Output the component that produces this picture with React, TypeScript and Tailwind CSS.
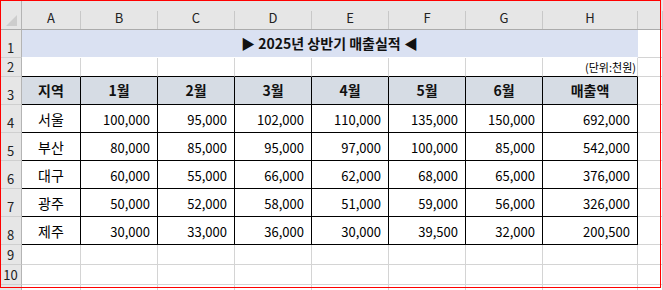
import React from "react";

const cols = ["A", "B", "C", "D", "E", "F", "G", "H"];
const headers = ["지역", "1월", "2월", "3월", "4월", "5월", "6월", "매출액"];
const data = [
  ["서울", "100,000", "95,000", "102,000", "110,000", "135,000", "150,000", "692,000"],
  ["부산", "80,000", "85,000", "95,000", "97,000", "100,000", "85,000", "542,000"],
  ["대구", "60,000", "55,000", "66,000", "62,000", "68,000", "65,000", "376,000"],
  ["광주", "50,000", "52,000", "58,000", "51,000", "59,000", "56,000", "326,000"],
  ["제주", "30,000", "33,000", "36,000", "30,000", "39,500", "32,000", "200,500"],
];

const font = { fontFamily: '"Noto Sans CJK KR", "Noto Sans", sans-serif' };

function RowHead({ n }: { n?: number }) {
  return (
    <div className="flex items-end justify-center overflow-hidden bg-[#e6e6e6] border-r border-b border-r-[#b4b4b4] border-b-[#cfcfcf] pb-[2px] text-[13px] leading-[14px] text-[#222]">
      {n}
    </div>
  );
}

function ColHead({ label }: { label: string }) {
  return (
    <div className="flex bg-[#e6e6e6] border-b border-b-[#ababab]">
      <div className="flex-1 flex items-end justify-center pb-[4px] text-[13px] leading-[14px] text-[#222]">{label}</div>
      <div className="w-px h-[18px] self-end bg-[#c8c8c8]" />
    </div>
  );
}

function Gray({ bottomBlack = false }: { bottomBlack?: boolean }) {
  return (
    <div
      className={
        bottomBlack
          ? "bg-white border-r border-b border-r-[#d4d4d4] border-b-black"
          : "bg-white border-r border-b border-[#d4d4d4]"
      }
    />
  );
}

export default function App() {
  return (
    <div className="relative w-[663px] h-[290px] bg-white overflow-hidden" style={font}>
      <div className="grid w-[663px] h-[290px] grid-cols-[22px_59px_77px_77px_77px_77px_77px_77px_95px_1fr] grid-rows-[30px_28px_19px_28px_28px_28px_28px_28px_28px_20px_20px_6px]">
        {/* header row */}
        <div className="flex items-end justify-end bg-[#e6e6e6] border-r border-b border-r-[#b4b4b4] border-b-[#ababab] pr-[4px] pb-[3px]">
          <svg width="11" height="11" viewBox="0 0 11 11">
            <polygon points="0,11 11,0 11,11" fill="#cdcdcd" />
          </svg>
        </div>
        {cols.map((c) => (
          <ColHead key={c} label={c} />
        ))}
        <ColHead label="" />

        {/* row 1 */}
        <RowHead n={1} />
        <div className="col-span-8 flex items-center justify-center bg-[#dae1f2] border-r border-b border-r-transparent border-b-white text-[14px] font-bold text-[#111]">
          ▶ 2025년 상반기 매출실적 ◀
        </div>
        <Gray />

        {/* row 2 */}
        <RowHead n={2} />
        {cols.slice(0, 7).map((c) => (
          <Gray key={c} bottomBlack />
        ))}
        <div className="flex items-end justify-end bg-white border-r border-b border-r-[#d4d4d4] border-b-black pr-[1px] pb-[2px] text-[11px] leading-[13px] text-black">
          (단위:천원)
        </div>
        <Gray />

        {/* row 3 */}
        <RowHead n={3} />
        {headers.map((h) => (
          <div
            key={h}
            className="flex items-center justify-center bg-[#d6dce4] border-r border-b border-black text-[14px] font-bold text-[#111]"
          >
            {h}
          </div>
        ))}
        <Gray />

        {/* data rows */}
        {data.map((row, ri) => (
          <React.Fragment key={ri}>
            <RowHead n={4 + ri} />
            {row.map((v, ci) => (
              <div
                key={ci}
                className={
                  ci === 0
                    ? "flex items-center justify-center pt-[2px] bg-white border-r border-b border-black text-[14px] text-black"
                    : "flex items-center justify-end pt-[2px] pr-[7px] bg-white border-r border-b border-black text-[13px] text-black"
                }
              >
                {v}
              </div>
            ))}
            <Gray />
          </React.Fragment>
        ))}

        {/* rows 9-11 */}
        {[9, 10, 11].map((n) => (
          <React.Fragment key={n}>
            <RowHead n={n === 11 ? undefined : n} />
            {cols.map((c) => (
              <Gray key={c} />
            ))}
            <Gray />
          </React.Fragment>
        ))}
      </div>
      <div className="absolute left-0 top-0 w-[661px] h-[288px] border border-[#ff0000] pointer-events-none" />
    </div>
  );
}
